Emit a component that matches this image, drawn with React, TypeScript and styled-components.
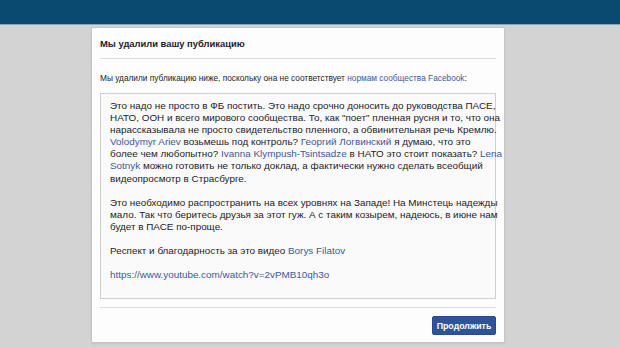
import React from 'react';
import styled, { createGlobalStyle } from 'styled-components';

const GlobalStyle = createGlobalStyle`
  html, body {
    margin: 0;
    padding: 0;
    background: #d3d3d3;
  }
  body {
    font-family: "Liberation Sans", Arial, sans-serif;
  }
`;

const Page = styled.div`
  width: 620px;
  height: 348px;
  background: #d3d3d3;
  overflow: hidden;
  display: flex;
  flex-direction: column;
`;

const TopBar = styled.div`
  height: 24px;
  background: #0a4a70;
  border-bottom: 1px solid #8aa3b6;
  flex-shrink: 0;
`;

const Main = styled.div`
  padding: 2px 0 0 91px;
`;

const Card = styled.div`
  width: 396px;
  padding: 0 8px;
  background: #fdfdfd;
  border: 1px solid #c6c6c6;
  border-radius: 2px;
  box-shadow: 0 1px 2px rgba(0, 0, 0, 0.08);
`;

const Header = styled.div`
  height: 30px;
  display: flex;
  align-items: center;
  border-bottom: 1px solid #dcdcdc;
`;

const Title = styled.h2`
  margin: 0;
  font-size: 9.4px;
  font-weight: bold;
  color: #1d2129;
`;

const Intro = styled.p`
  margin: 13px 0 9px;
  font-size: 8.3px;
  line-height: 12px;
  color: #1d2129;
  white-space: nowrap;
`;

const Link = styled.a`
  color: #3b5998;
  text-decoration: none;
`;

const PostBox = styled.div`
  border: 1px solid #cfcfcf;
  background: #fafafa;
  padding: 6px 9px 17px;
`;

const Paragraph = styled.p`
  margin: 0 0 12px;
  font-size: 9.9px;
  line-height: 12.1px;
  color: #1d2129;
  white-space: nowrap;

  &:last-child {
    margin-bottom: 0;
  }
`;

const Footer = styled.div`
  margin-top: 8px;
  border-top: 1px solid #dcdcdc;
  padding: 8px 0 7px;
  display: flex;
  justify-content: flex-end;
`;

const Button = styled.button`
  width: 64px;
  height: 19px;
  padding: 0;
  border: 1px solid #2a4a8f;
  border-radius: 2px;
  background: #2f5397;
  color: #fff;
  font-family: "Liberation Sans", Arial, sans-serif;
  font-size: 8.8px;
  font-weight: bold;
`;

const App: React.FC = () => {
  return (
    <>
      <GlobalStyle />
      <Page>
        <TopBar />
        <Main>
          <Card>
            <Header>
              <Title>Мы удалили вашу публикацию</Title>
            </Header>
            <Intro>
              Мы удалили публикацию ниже, поскольку она не соответствует{' '}
              <Link href="#">нормам сообщества Facebook</Link>:
            </Intro>
            <PostBox>
              <Paragraph>
                Это надо не просто в ФБ постить. Это надо срочно доносить до руководства ПАСЕ,
                <br />
                НАТО, ООН и всего мирового сообщества. То, как "поет" пленная русня и то, что она
                <br />
                нарассказывала не просто свидетельство пленного, а обвинительная речь Кремлю.
                <br />
                <Link href="#">Volodymyr Ariev</Link> возьмешь под контроль?{' '}
                <Link href="#">Георгий Логвинский</Link> я думаю, что это
                <br />
                более чем любопытно? <Link href="#">Ivanna Klympush-Tsintsadze</Link> в НАТО это стоит показать?{' '}
                <Link href="#">Lena</Link>
                <br />
                <Link href="#">Sotnyk</Link> можно готовить не только доклад, а фактически нужно сделать всеобщий
                <br />
                видеопросмотр в Страсбурге.
              </Paragraph>
              <Paragraph>
                Это необходимо распространить на всех уровнях на Западе! На Минстець надежды
                <br />
                мало. Так что беритесь друзья за этот гуж. А с таким козырем, надеюсь, в июне нам
                <br />
                будет в ПАСЕ по-проще.
              </Paragraph>
              <Paragraph>
                Респект и благодарность за это видео <Link href="#">Borys Filatov</Link>
              </Paragraph>
              <Paragraph>
                <Link href="#">https://www.youtube.com/watch?v=2vPMB10qh3o</Link>
              </Paragraph>
            </PostBox>
            <Footer>
              <Button>Продолжить</Button>
            </Footer>
          </Card>
        </Main>
      </Page>
    </>
  );
};

export default App;
